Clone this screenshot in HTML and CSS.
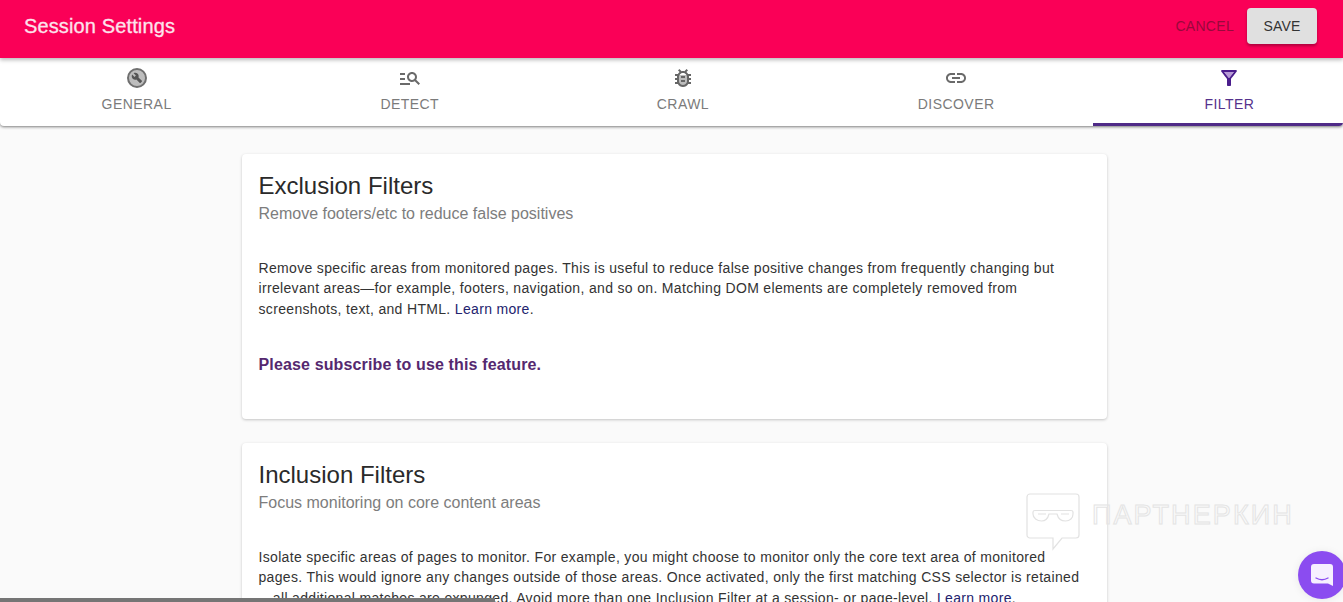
FILE: index.html
```html
<!DOCTYPE html>
<html lang="en">
<head>
<meta charset="utf-8">
<title>Session Settings</title>
<link rel="stylesheet" href="styles.css">
</head>
<body>
<div class="app">
  <header class="topbar">
    <h1 class="topbar-title">Session Settings</h1>
    <div class="topbar-actions">
      <button class="btn btn-cancel" type="button">Cancel</button>
      <button class="btn btn-save" type="button">Save</button>
    </div>
  </header>
  <nav class="tabs">
    <div class="tab">
      <svg class="tab-icon" viewBox="0 0 24 24"><circle cx="12" cy="12" r="9" fill="#bdbdbd" stroke="#6f6f6f" stroke-width="2"/><path fill="#555" d="M16.9 15.49l-1.4 1.4c-.2.2-.51.2-.71 0l-3.41-3.41c-1.22.43-2.64.17-3.62-.81-1.11-1.11-1.3-2.79-.59-4.1l2.35 2.35 1.41-1.41-2.35-2.34c1.32-.71 2.99-.52 4.1.59.98.98 1.24 2.4.81 3.62l3.41 3.41c.19.19.19.51 0 .7z"/></svg>
      <span>General</span>
    </div>
    <div class="tab">
      <svg class="tab-icon" viewBox="0 0 24 24"><path fill="#6a6a6a" d="M7 9H2V7h5v2zm0 3H2v2h5v-2zm13.59 7l-3.83-3.83c-.8.52-1.74.83-2.76.83-2.76 0-5-2.24-5-5s2.24-5 5-5 5 2.24 5 5c0 1.02-.31 1.96-.83 2.75L22 17.59 20.59 19zM17 11c0-1.65-1.35-3-3-3s-3 1.35-3 3 1.35 3 3 3 3-1.35 3-3zM2 19h10v-2H2v2z"/></svg>
      <span>Detect</span>
    </div>
    <div class="tab">
      <svg class="tab-icon" viewBox="0 0 24 24"><path fill="#bdbdbd" d="M8 9h8v10H8z"/><path fill="#666" d="M20 8h-2.81c-.45-.78-1.07-1.45-1.82-1.96L17 4.41 15.59 3l-2.17 2.17C12.96 5.06 12.49 5 12 5s-.96.06-1.41.17L8.41 3 7 4.41l1.62 1.63C7.88 6.55 7.26 7.22 6.81 8H4v2h2.09c-.05.33-.09.66-.09 1v1H4v2h2v1c0 .34.04.67.09 1H4v2h2.81c1.04 1.79 2.97 3 5.19 3s4.15-1.21 5.19-3H20v-2h-2.09c.05-.33.09-.66.09-1v-1h2v-2h-2v-1c0-.34-.04-.67-.09-1H20V8zm-4 4v3c0 .22-.03.47-.07.7l-.1.65-.37.65c-.72 1.24-2.04 2-3.46 2s-2.74-.77-3.46-2l-.37-.64-.1-.65C8.03 15.47 8 15.22 8 15v-4c0-.22.03-.47.07-.7l.1-.65.37-.65c.3-.52.72-.97 1.21-1.31l.57-.39.74-.18c.31-.08.63-.12.94-.12.32 0 .63.04.95.12l.68.16.61.42c.5.34.91.78 1.21 1.31l.38.65.1.65c.04.22.07.47.07.69v1zm-6 2h4v2h-4zm0-4h4v2h-4z"/></svg>
      <span>Crawl</span>
    </div>
    <div class="tab">
      <svg class="tab-icon" viewBox="0 0 24 24"><path fill="#6a6a6a" d="M3.9 12c0-1.71 1.39-3.1 3.1-3.1h4V7H7c-2.76 0-5 2.24-5 5s2.24 5 5 5h4v-1.9H7c-1.71 0-3.1-1.39-3.1-3.1zM8 13h8v-2H8v2zm9-6h-4v1.9h4c1.71 0 3.1 1.39 3.1 3.1s-1.39 3.1-3.1 3.1h-4V17h4c2.76 0 5-2.24 5-5s-2.24-5-5-5z"/></svg>
      <span>Discover</span>
    </div>
    <div class="tab tab-active">
      <svg class="tab-icon" viewBox="0 0 24 24"><path fill="#b79ad6" d="M7 6h10l-5 6.3z"/><path fill="#4a1d8c" fill-rule="evenodd" d="M4.25 5.61C6.27 8.2 10 13 10 13v6c0 .55.45 1 1 1h2c.55 0 1-.45 1-1v-6s3.72-4.8 5.74-7.39c.51-.66.04-1.61-.79-1.61H5.04c-.83 0-1.3.95-.79 1.61zM7 6h10l-5 6.3z"/></svg>
      <span>Filter</span>
    </div>
  </nav>
  <main class="content">
    <section class="card">
      <h2 class="card-title">Exclusion Filters</h2>
      <p class="card-subtitle">Remove footers/etc to reduce false positives</p>
      <p class="card-text">Remove specific areas from monitored pages. This is useful to reduce false positive changes from frequently changing but irrelevant areas—for example, footers, navigation, and so on. Matching DOM elements are completely removed from screenshots, text, and HTML. <a class="link" href="#">Learn more</a>.</p>
      <p class="card-notice">Please subscribe to use this feature.</p>
    </section>
    <section class="card">
      <h2 class="card-title">Inclusion Filters</h2>
      <p class="card-subtitle">Focus monitoring on core content areas</p>
      <p class="card-text">Isolate specific areas of pages to monitor. For example, you might choose to monitor only the core text area of monitored pages. This would ignore any changes outside of those areas. Once activated, only the first matching CSS selector is retained —all additional matches are expunged. Avoid more than one Inclusion Filter at a session- or page-level. <a class="link" href="#">Learn more</a>.</p>
    </section>
  </main>
  <div class="watermark">
    <svg class="watermark-icon" viewBox="0 0 54 58" fill="none" stroke="#e2e2e2" stroke-width="1.2"><path d="M4 1h46a3 3 0 0 1 3 3v38a3 3 0 0 1-3 3H36L27 56V45H4a3 3 0 0 1-3-3V4a3 3 0 0 1 3-3z"/><path d="M7 19c0-1 1-1.500 2-1.500h36c1 0 2 .5 2 1.500v2c0 4-3 7-7.500 7S32 25 31 21h-8c-1 4-3 7-7.500 7S7 25 7 21z"/><path d="M12 21h8M35 21h8"/></svg>
    <span class="watermark-text">ПАРТНЕРКИН</span>
  </div>
  <div class="scroll-thumb"></div>
  <div class="chat-launcher">
    <svg class="chat-icon" viewBox="0 0 24 24"><path fill="#f6f0ff" d="M4 1h16a3 3 0 0 1 3 3v19l-5-2.400H4a3 3 0 0 1-3-3V4a3 3 0 0 1 3-3z"/><path fill="none" stroke="#8b4cf0" stroke-width="1.400" stroke-linecap="round" d="M6 15c3.500 2 8.500 2 12 0"/></svg>
  </div>
</div>
</body>
</html>
```

FILE: styles.css
```css
* { box-sizing: border-box; }
html, body { margin: 0; height: 100%; }
body {
  background: #fafafa;
  font-family: "Liberation Sans", Arial, sans-serif;
  color: #222;
  overflow: hidden;
}
.app { position: relative; height: 100vh; overflow: hidden; }
.topbar {
  position: relative;
  z-index: 2;
  height: 58px;
  display: flex;
  align-items: center;
  justify-content: space-between;
  padding: 0 26px 6px 24px;
  background: #fa0057;
  box-shadow: 0 2px 4px rgba(0,0,0,.28);
}
.topbar-title { margin: 0; font-size: 20px; font-weight: 400; letter-spacing: .13px; color: #fde3ec; -webkit-text-stroke: .3px #fde3ec; }
.topbar-actions { display: flex; align-items: center; gap: 5px; }
.btn { border: 0; font: inherit; font-size: 14px; text-transform: uppercase; border-radius: 4px; height: 36px; padding: 0 16px; letter-spacing: .2px; }
.btn-cancel { background: none; color: #99083c; padding: 0 8px; letter-spacing: .3px; }
.btn-save { background: #e0e0e0; color: #333; width: 70px; box-shadow: 0 2px 3px rgba(0,0,0,.3); }
.tabs {
  position: relative;
  z-index: 1;
  height: 68px;
  display: flex;
  overflow: hidden;
  background: #fff;
  border-radius: 0 0 4px 4px;
  box-shadow: 0 1px 3px rgba(0,0,0,.5);
}
.tab {
  flex: 0 0 273.2px;
  height: 68px;
  padding-top: 8px;
  display: flex;
  flex-direction: column;
  align-items: center;
  gap: 6px;
  color: #7b7b7b;
  font-size: 14px;
  letter-spacing: .45px;
  text-transform: uppercase;
}
.tab-icon { width: 24px; height: 24px; display: block; flex: none; }
.tab-active { color: #55328c; border-bottom: 3px solid #4f2a87; }
.content { margin-left: 242px; width: 865px; padding-top: 28px; display: flex; flex-direction: column; gap: 24px; }
.card {
  background: #fff;
  border-radius: 4px;
  padding: 16px 17px 0 16.5px;
  box-shadow: 0 1px 3px rgba(0,0,0,.22);
}
.card:first-child { height: 265px; }
.card-title { margin: 0; font-size: 24px; font-weight: 400; line-height: 32px; color: #2a2a2a; }
.card-subtitle { margin: 0 0 32px; font-size: 16px; line-height: 24px; color: #7d7d7d; }
.card-text { margin: 0; font-size: 14px; line-height: 20.4px; letter-spacing: .33px; color: #333; }
.link { color: #23236e; text-decoration: none; }
.card-notice { margin: 36px 0 0; font-size: 16px; line-height: 20px; font-weight: 700; letter-spacing: .14px; color: #55286f; }
.watermark { position: absolute; left: 1026px; top: 493px; display: flex; align-items: flex-start; gap: 12px; }
.watermark-icon { width: 54px; height: 58px; display: block; }
.watermark-text { margin-top: 7px; font-size: 27px; line-height: 30px; letter-spacing: 2.1px; color: transparent; -webkit-text-stroke: 1px #e4e4e4; }
.scroll-thumb { position: absolute; left: 0; bottom: 0; width: 495px; height: 4px; background: #757575; }
.chat-launcher {
  position: absolute;
  left: 1298px;
  top: 551px;
  width: 48px;
  height: 48px;
  border-radius: 50%;
  background: #8b4cf0;
  display: flex;
  align-items: center;
  justify-content: center;
  box-shadow: 0 1px 8px rgba(0,0,0,.08);
}
.chat-icon { width: 24px; height: 26px; display: block; }
```
